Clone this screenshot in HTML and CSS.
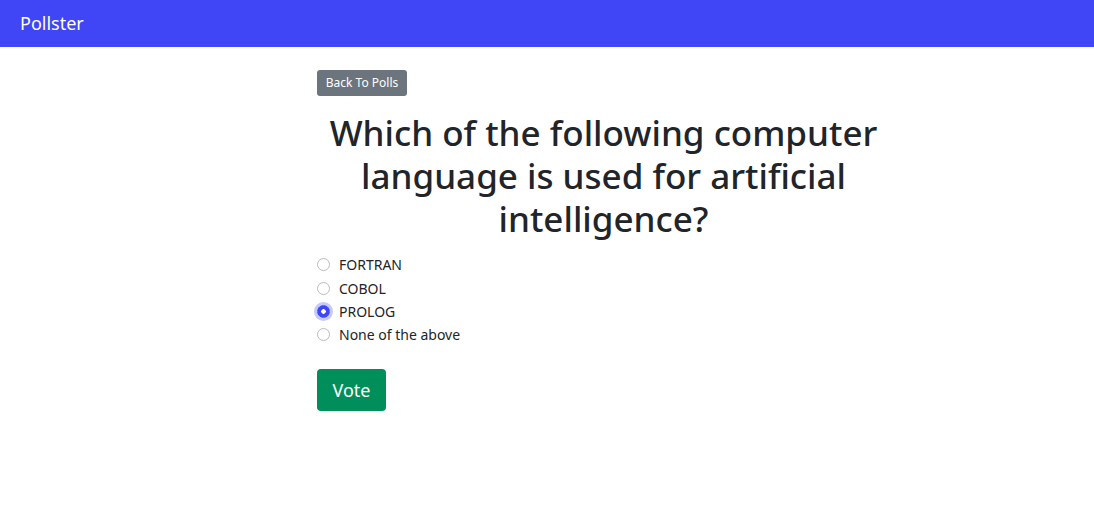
FILE: index.html
```html
<!DOCTYPE html>
<html lang="en">
<head>
<meta charset="utf-8">
<title>Pollster</title>
<link rel="stylesheet" href="styles.css">
</head>
<body>
<header class="navbar">
  <a class="brand" href="#">Pollster</a>
</header>
<main class="page">
  <div class="column">
    <a class="btn btn-back" href="#">Back To Polls</a>
    <h1 class="question">Which of the following computer language is used for artificial intelligence?</h1>
    <form class="poll">
      <label class="choice"><input type="radio" name="choice"><span>FORTRAN</span></label>
      <label class="choice"><input type="radio" name="choice"><span>COBOL</span></label>
      <label class="choice checked"><input type="radio" name="choice" checked><span>PROLOG</span></label>
      <label class="choice"><input type="radio" name="choice"><span>None of the above</span></label>
      <button type="button" class="btn btn-vote">Vote</button>
    </form>
  </div>
</main>
</body>
</html>
```

FILE: styles.css
```css
* { box-sizing: border-box; }
html, body { margin: 0; padding: 0; }
body {
  font-family: "Noto Sans", "Open Sans", sans-serif;
  color: #212529;
  background: #fff;
  width: 1094px;
  height: 508px;
  overflow: hidden;
}
.navbar {
  height: 47px;
  background: #4046f5;
  display: flex;
  align-items: center;
  padding: 0 20px;
}
.brand {
  color: #fff;
  text-decoration: none;
  font-size: 18px;
  line-height: 1;
  padding-bottom: 2px;
}
.page {
  padding-left: 317px;
  padding-top: 23px;
}
.column {
  width: 573px;
  display: flex;
  flex-direction: column;
  align-items: flex-start;
}
.btn {
  display: inline-block;
  border: none;
  border-radius: 3px;
  color: #fff;
  text-decoration: none;
  font-family: inherit;
}
.btn-back {
  background: #6c757d;
  font-size: 12px;
  line-height: 18px;
  padding: 4px 8px;
  height: 26px;
  width: 90px;
  text-align: center;
}
.question {
  align-self: stretch;
  text-align: center;
  font-size: 35px;
  font-weight: 500;
  line-height: 43px;
  margin: 15px 0 13px;
}
.poll {
  display: flex;
  flex-direction: column;
  align-items: flex-start;
}
.choice {
  display: flex;
  align-items: center;
  height: 23.4px;
  font-size: 14px;
}
.choice input {
  appearance: none;
  width: 13px;
  height: 13px;
  margin: 0 9px 0 0;
  border: 1px solid #b8bcc0;
  border-radius: 50%;
  background: #fff;
}
.choice input:checked {
  border-color: #4046f5;
  background: radial-gradient(circle, #fff 0 2px, #4046f5 2.5px);
  box-shadow: 0 0 0 3px #c6c9fc;
}
.btn-vote {
  margin-top: 22px;
  background: #008f5a;
  font-size: 18px;
  line-height: 26px;
  padding: 8px 15px;
  height: 42px;
  width: 69px;
  text-align: center;
  border-radius: 4px;
}
```
